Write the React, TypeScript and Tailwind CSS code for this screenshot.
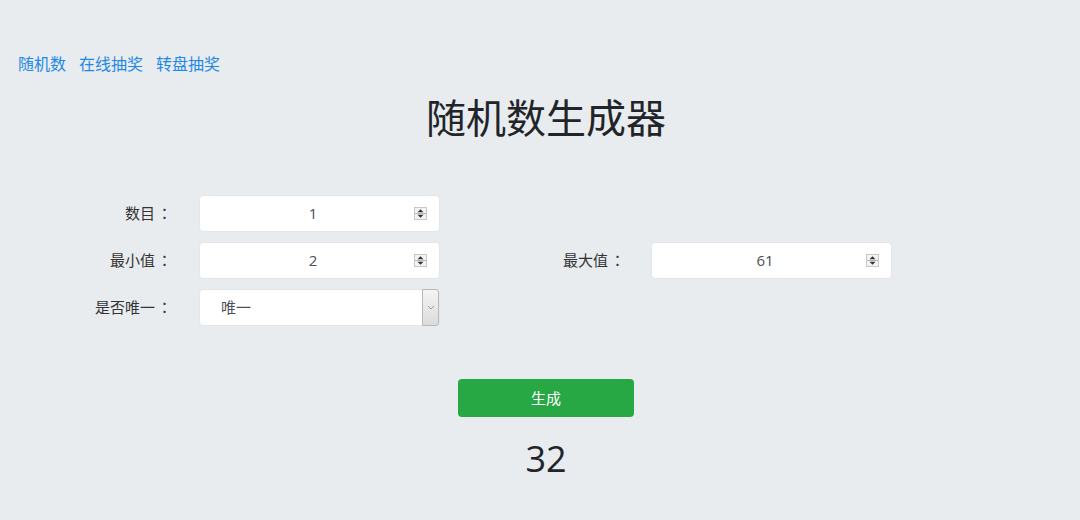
import React, { useState } from 'react';

const FONT = '"Open Sans", "Noto Sans CJK SC", sans-serif';

const Spinner = () => (
  <svg width="13" height="13" viewBox="0 0 13 13" className="shrink-0">
    <rect x="0.5" y="0.5" width="12" height="12" fill="#f3f3f3" stroke="#c8c8c8" />
    <path d="M3.5 5.2 L6.5 2.3 L9.5 5.2 Z" fill="#333" />
    <path d="M3.5 7.8 L6.5 10.7 L9.5 7.8 Z" fill="#333" />
    <line x1="1" y1="6.5" x2="12" y2="6.5" stroke="#b5b5b5" />
  </svg>
);

const Label = ({ text, className }: { text: string; className: string }) => (
  <label className={`${className} text-right text-[15px] text-[#333]`}>
    {text}
    <span className="ml-[2px]" style={{ fontFamily: '"Noto Sans CJK TC", sans-serif' }}>：</span>
  </label>
);

const NumberField = ({ value }: { value: string }) => (
  <div className="flex h-[37px] w-[241px] items-center rounded-[4px] border border-[#e3e6ea] bg-white pl-3 pr-[12px]">
    <span className="flex-1 text-center text-[15px] text-[#495057]">{value}</span>
    <Spinner />
  </div>
);

export default function App() {
  const [result] = useState(32);

  return (
    <div className="min-h-[520px] w-full bg-[#e9ecef]" style={{ fontFamily: FONT }}>
      <nav className="flex gap-[13px] pl-[18px] pt-[52px] text-[16px] leading-6 text-[#1e88e5]">
        <a href="#">随机数</a>
        <a href="#">在线抽奖</a>
        <a href="#">转盘抽奖</a>
      </nav>

      <h1 className="mt-[18px] pl-[12px] text-center text-[40px] leading-[48px] font-normal text-[#212529]">
        随机数生成器
      </h1>

      <form className="mt-[53px] flex flex-col gap-[10px]">
        <div className="flex items-center">
          <Label text="数目" className="w-[172px]" />
          <div className="ml-[27px]">
            <NumberField value="1" />
          </div>
        </div>
        <div className="flex items-center">
          <Label text="最小值" className="w-[172px]" />
          <div className="ml-[27px]">
            <NumberField value="2" />
          </div>
          <Label text="最大值" className="w-[185px]" />
          <div className="ml-[26px]">
            <NumberField value="61" />
          </div>
        </div>
        <div className="flex items-center">
          <Label text="是否唯一" className="w-[172px]" />
          <div className="ml-[27px] flex h-[37px] w-[241px] items-stretch rounded-[4px] border border-[#e3e6ea] bg-white">
            <span className="flex flex-1 items-center pl-[21px] text-[15px] text-[#495057]">唯一</span>
            <span className="my-[-1px] flex w-[17px] items-center justify-center rounded-r-[3px] border border-[#b9b9b9] bg-gradient-to-b from-[#f4f4f4] to-[#dcdcdc]">
              <svg width="8" height="5" viewBox="0 0 8 5">
                <path d="M1 1 L4 4 L7 1" fill="none" stroke="#888" strokeWidth="0.8" />
              </svg>
            </span>
          </div>
        </div>

        <div className="mt-[43px] flex justify-center pl-[12px]">
          <button
            type="button"
            className="h-[38px] w-[176px] rounded-[4px] bg-[#28a745] text-[15px] text-white"
          >
            生成
          </button>
        </div>
      </form>

      <div className="mt-[18px] pl-[12px] text-center text-[36px] leading-[48px] text-[#212529]">{result}</div>
    </div>
  );
}
